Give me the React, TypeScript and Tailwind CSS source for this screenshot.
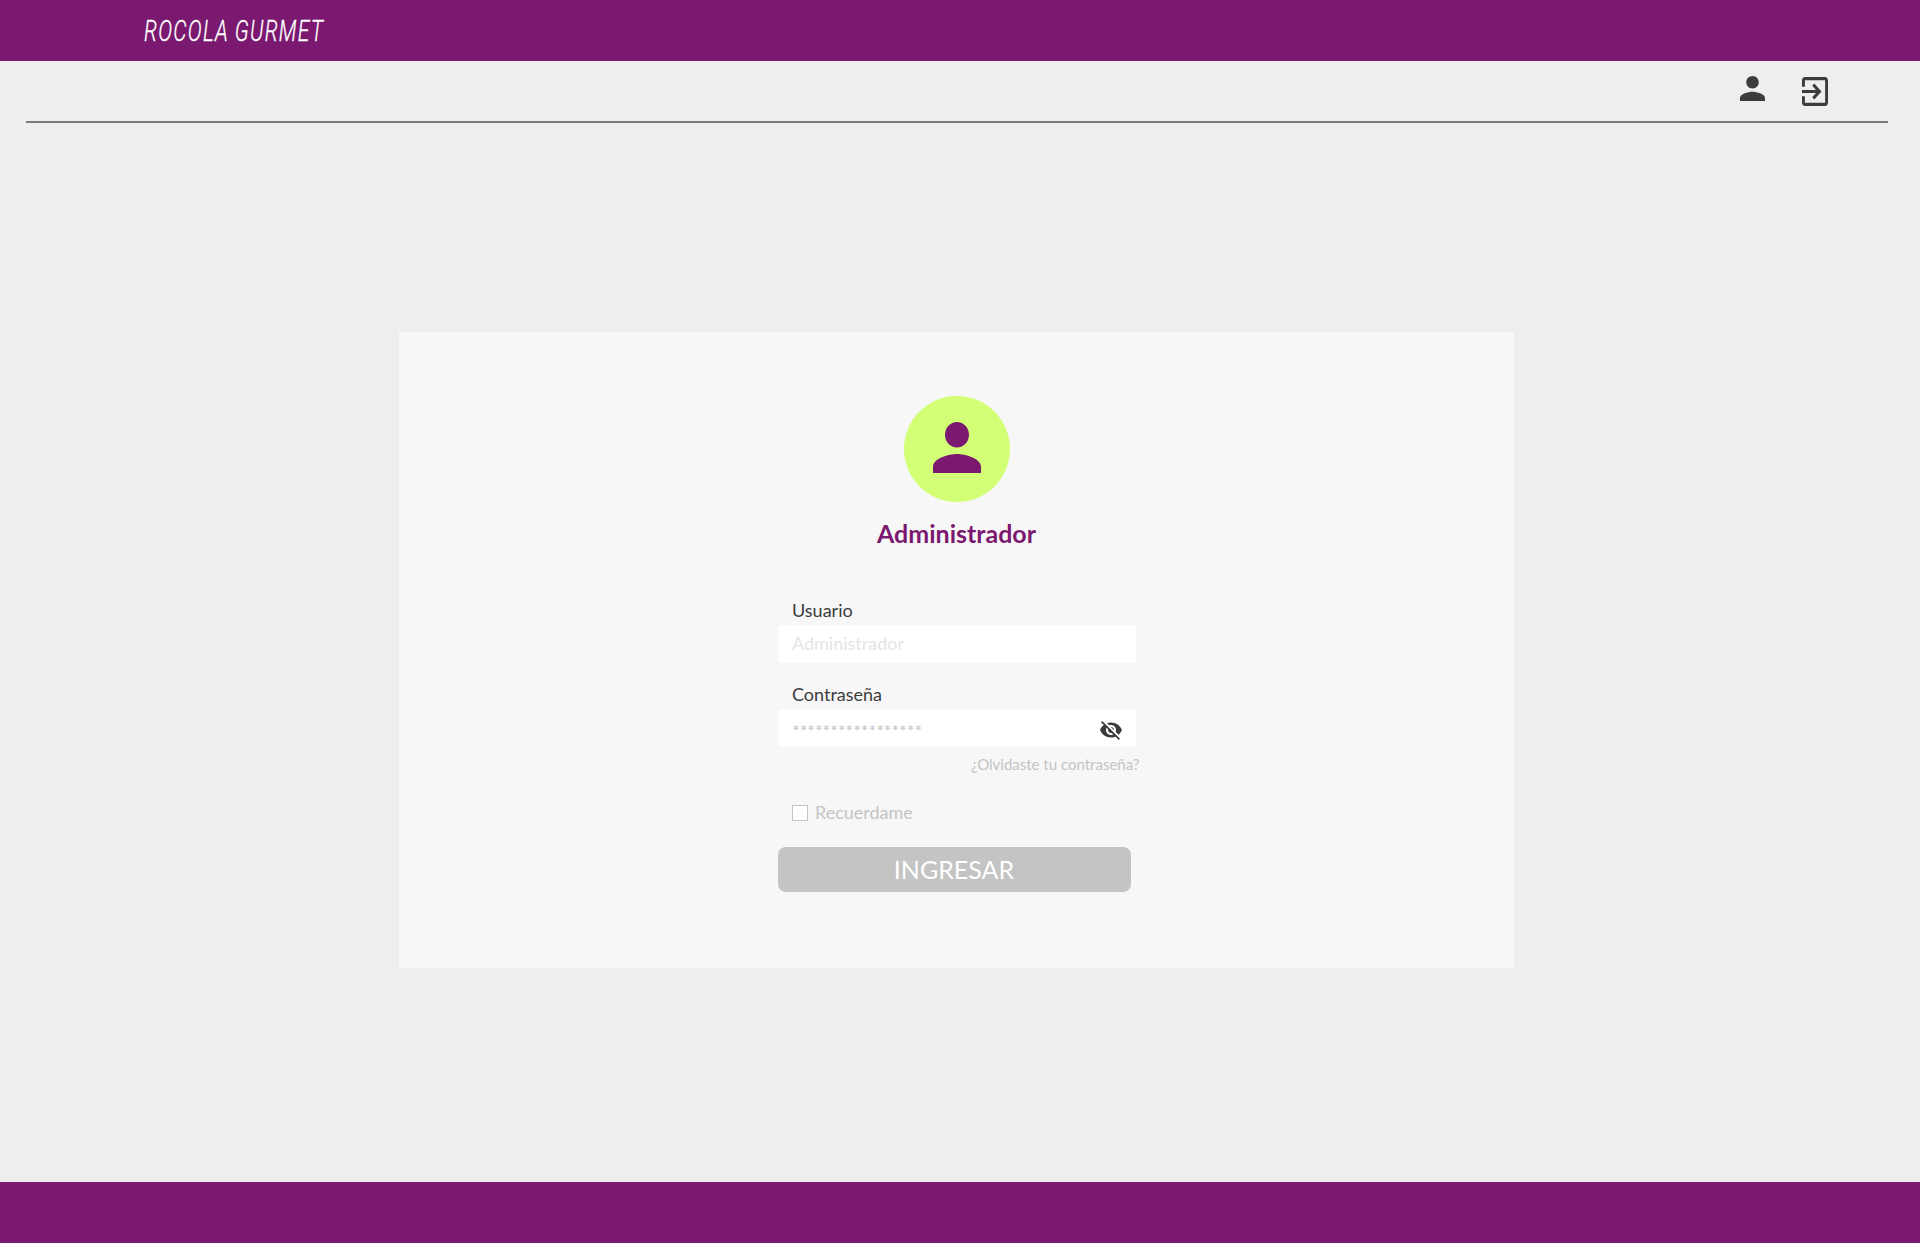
const PERSON =
  'M12 12c2.21 0 4-1.79 4-4s-1.79-4-4-4-4 1.79-4 4 1.79 4 4 4zm0 2c-2.67 0-8 1.34-8 4v2h16v-2c0-2.66-5.33-4-8-4z';
const EXIT =
  'M10.09 15.59L11.5 17l5-5-5-5-1.41 1.41L12.67 11H3v2h9.67l-2.58 2.59zM19 3H5c-1.11 0-2 .9-2 2v4h2V5h14v14H5v-4H3v4c0 1.1.89 2 2 2h14c1.1 0 2-.9 2-2V5c0-1.1-.9-2-2-2z';
const EYE_OFF =
  'M12 7c2.76 0 5 2.24 5 5 0 .65-.13 1.26-.36 1.83l2.92 2.92c1.51-1.26 2.7-2.89 3.43-4.75-1.73-4.39-6-7.5-11-7.5-1.4 0-2.74.25-3.98.7l2.16 2.16C10.74 7.13 11.35 7 12 7zM2 4.27l2.28 2.28.46.46C3.08 8.3 1.78 10.02 1 12c1.73 4.39 6 7.5 11 7.5 1.55 0 3.03-.3 4.38-.84l.42.42L19.73 22 21 20.73 3.27 3 2 4.27zM7.53 9.8l1.55 1.55c-.05.21-.08.43-.08.65 0 1.66 1.34 3 3 3 .22 0 .44-.03.65-.08l1.55 1.55c-.67.33-1.41.53-2.2.53-2.76 0-5-2.24-5-5 0-.79.2-1.53.53-2.2zm4.31-.78l3.15 3.15.02-.16c0-1.66-1.34-3-3-3l-.17.01z';

function Glyph({ d, box, className }: { d: string; box: string; className: string }) {
  return (
    <svg viewBox={box} preserveAspectRatio="none" fill="currentColor" className={className}>
      <path d={d} />
    </svg>
  );
}

function TopBar() {
  return (
    <header className="flex h-[61px] shrink-0 items-center bg-[#7a196f] pl-[144.25px]">
      <h1 className="origin-left scale-x-[0.725] whitespace-nowrap pt-[2px] font-['Roboto',sans-serif] text-[29px] leading-[59px] font-light tracking-[1.75px] [word-spacing:-1px] text-white italic [-webkit-text-stroke:0.35px_white]">
        ROCOLA GURMET
      </h1>
    </header>
  );
}

function Toolbar() {
  return (
    <nav className="mr-[32px] ml-[26px] flex h-[62px] shrink-0 items-start justify-end gap-[37px] border-b-2 border-[#7b7b78] pr-[60px] text-[#3c3c3c]">
      <button className="mt-[15px]" aria-label="Perfil">
        <Glyph d={PERSON} box="4 4 16 16" className="block h-[25px] w-[25px]" />
      </button>
      <button className="mt-[16px]" aria-label="Salir">
        <Glyph d={EXIT} box="3 3 18 18" className="block h-[29px] w-[26px]" />
      </button>
    </nav>
  );
}

function LoginForm() {
  return (
    <form className="flex w-[358px] flex-col">
      <label className="ml-[14.5px] h-6 text-[18px] leading-6 text-[#3c3c3c]">Usuario</label>
      <div className="mt-[3px] h-[38px] rounded-[4px] bg-white pl-[14.5px] text-[18px] leading-[36px] text-[#e5e5e5]">
        Administrador
      </div>
      <label className="mt-[19px] ml-[14.5px] h-6 text-[18px] leading-6 text-[#3c3c3c]">Contraseña</label>
      <div className="mt-[3px] flex h-[38px] items-center justify-between rounded-[4px] bg-white pr-[14px] pl-[14.5px] text-[18px] text-[#c4c4c4]">
        <span className="pt-[7px]">*****************</span>
        <Glyph d={EYE_OFF} box="1 3 22 19" className="mt-[4px] block h-[19px] w-[22px] text-[#3c3c3c]" />
      </div>
      <a className="-mr-[4px] mt-[7px] self-end whitespace-nowrap text-[15px] leading-5 text-[#c4c4c4]">
        ¿Olvidaste tu contraseña?
      </a>
      <div className="mt-[26px] ml-[14px] flex h-6 gap-[7.5px] text-[18px] leading-6 text-[#c4c4c4]">
        <span className="mt-[5px] h-4 w-4 border border-[#c4c4c4] bg-white" />
        Recuerdame
      </div>
      <button
        type="button"
        className="mt-[23px] h-[45px] w-[353px] rounded-[8px] bg-[#c4c4c4] text-[25px] leading-[45px] text-white"
      >
        INGRESAR
      </button>
    </form>
  );
}

export default function App() {
  return (
    <div className="flex h-[1243px] w-[1920px] flex-col overflow-hidden bg-[#eeeeee] font-['Lato',sans-serif]">
      <TopBar />
      <Toolbar />
      <main className="flex-1 pt-[209px] pl-[399px]">
        <section className="flex h-[636px] w-[1115px] flex-col items-center bg-[#f7f7f7] pt-[64px]">
          <div className="flex h-[106px] w-[106px] justify-center rounded-full bg-[#d2ff76] pt-[26px] text-[#7a196f]">
            <Glyph d={PERSON} box="4 4 16 16" className="block h-[51px] w-[48px]" />
          </div>
          <h2 className="mt-[16px] mb-[50px] h-[30px] text-[25px] leading-[30px] font-bold text-[#7a196f]">
            Administrador
          </h2>
          <LoginForm />
        </section>
      </main>
      <footer className="h-[61px] shrink-0 bg-[#7a196f]" />
    </div>
  );
}
